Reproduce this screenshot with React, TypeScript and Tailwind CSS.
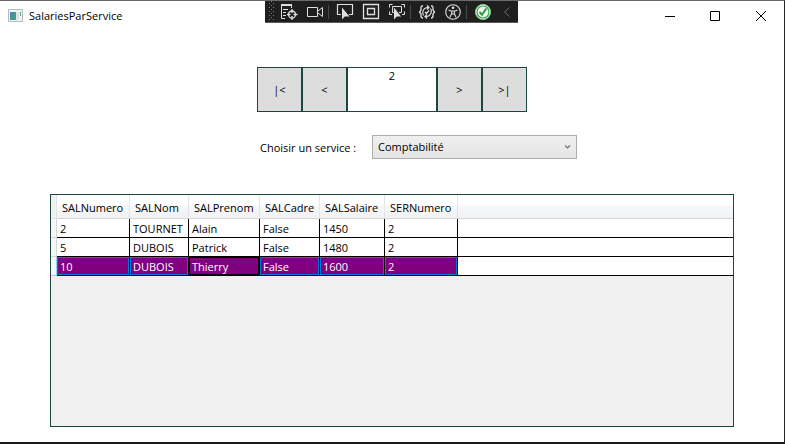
import React, { useState } from "react";

const columns = [
  { name: "SALNumero", width: "w-[73px]" },
  { name: "SALNom", width: "w-[59px]" },
  { name: "SALPrenom", width: "w-[71px]" },
  { name: "SALCadre", width: "w-[60px]" },
  { name: "SALSalaire", width: "w-[65px]" },
  { name: "SERNumero", width: "w-[73px]" },
];

const rows = [
  ["2", "TOURNET", "Alain", "False", "1450", "2"],
  ["5", "DUBOIS", "Patrick", "False", "1480", "2"],
  ["10", "DUBOIS", "Thierry", "False", "1600", "2"],
];

function Icon({ children }: { children: React.ReactNode }) {
  return (
    <svg viewBox="0 0 18 18" className="h-[18px] w-[18px]" fill="none" stroke="#e0e0e0" aria-hidden="true">
      {children}
    </svg>
  );
}

function ToolButton({ label, children }: { label: string; children: React.ReactNode }) {
  return (
    <button type="button" aria-label={label} className="flex w-[26px] shrink-0 items-center justify-center">
      <Icon>{children}</Icon>
    </button>
  );
}

function Separator() {
  return (
    <div className="flex w-1 shrink-0 items-center">
      <div className="h-3.5 w-px bg-[#484848]" />
    </div>
  );
}

function DebugToolbar() {
  return (
    <div role="toolbar" aria-label="Débogage" className="absolute top-0 left-[265px] flex h-[22px] w-[253px] border-b border-[#5a5a5a] bg-[#1f1f1f]">
      <svg viewBox="0 0 11 21" className="h-[21px] w-[11px] shrink-0" fill="#7a7a7a" aria-hidden="true">
        {[2, 6, 10, 14, 18].map((y) => (
          <g key={y}>
            <rect x="4" y={y} width="1" height="1" />
            <rect x="8" y={y} width="1" height="1" />
            <rect x="6" y={y - 2} width="1" height="1" />
          </g>
        ))}
      </svg>
      <ToolButton label="Arborescence visuelle">
        <path d="M1 2H12" strokeWidth="2" />
        <path d="M1.5 3V15.5H5M11.5 3V5M3 6.5H8M3 9.5H6M3 12.5H6" />
        <circle cx="12" cy="11.5" r="3.5" strokeWidth="1.3" />
        <path d="M12 6V10M12 13V17M7 11.5H10.5M13.5 11.5H17.5" strokeWidth="1.3" />
      </ToolButton>
      <ToolButton label="Enregistrer">
        <path d="M1.5 4.5H11.5V13.5H1.5ZM12 8L16.5 4.5V13.5L12 10" />
      </ToolButton>
      <Separator />
      <ToolButton label="Sélectionner un élément">
        <path d="M5 11.5H1.5V1.5H16.5V11.5H13" strokeWidth="1.2" />
        <path d="M6 4.5V16.5L8.8 13.5H13.5Z" fill="#e0e0e0" stroke="none" />
      </ToolButton>
      <ToolButton label="Afficher la disposition">
        <path d="M1.5 1.5H16.5V15.5H1.5ZM5.5 5.5H12.5V11.5H5.5Z" strokeWidth="1.3" />
      </ToolButton>
      <ToolButton label="Suivre l’élément actif">
        <path d="M1.5 4.5V1.5H4.5M13.5 1.5H16.5V4.5M1.5 8.5V11.5H4M14 11.5H16.5V8.5M6 9.5H4.5V3.5H13.5V9.5H11" />
        <path d="M6 4.5V16.5L8.8 13.5H13Z" fill="#e0e0e0" stroke="none" />
      </ToolButton>
      <Separator />
      <ToolButton label="Rechargement à chaud">
        <path d="M5 3H4Q3 3 3 5V7L1.5 9L3 11V13Q3 15 5 15M13 3H14Q15 3 15 5V7L16.5 9L15 11V13Q15 15 13 15" strokeWidth="1.3" />
        <path d="M5.5 12.5C4 10 4.5 5.5 9 4.5H11M9 2.5L11 4.5L9 6.5M12.5 5.5C14 8 13.5 12.5 9 13.5H7M9 11.5L7 13.5L9 15.5M7 9L8.5 10.5L11 7.5" strokeWidth="1.2" />
      </ToolButton>
      <ToolButton label="Accessibilité">
        <circle cx="9" cy="9" r="7.3" strokeWidth="1.1" />
        <circle cx="9" cy="4.8" r="1.3" fill="#e0e0e0" stroke="none" />
        <path d="M4.5 7L7.7 8.3V10.5L6 14.3M13.5 7L10.3 8.3V10.5L12 14.3M7.7 8H10.3M7.7 11H10.3" strokeWidth="1.1" />
      </ToolButton>
      <Separator />
      <ToolButton label="Aucun échec de liaison">
        <circle cx="9" cy="9" r="7.6" fill="#f3f3f3" stroke="#7fc98a" />
        <circle cx="9" cy="9" r="6" stroke="#39a849" strokeWidth="1.2" />
        <path d="M5.5 9L8 11.7L12.3 5.5" stroke="#2c9b3d" strokeWidth="2" />
      </ToolButton>
      <button type="button" aria-label="Réduire la barre" className="flex flex-1 items-center justify-center">
        <svg viewBox="0 0 8 12" className="h-3 w-2" fill="none" stroke="#6e6e6e" aria-hidden="true">
          <path d="M6.5 1.5L1.5 6L6.5 10.5" />
        </svg>
      </button>
    </div>
  );
}

function TitleBar() {
  return (
    <header className="flex h-[29px] items-center pl-2">
      <svg viewBox="0 0 15 13" className="h-[13px] w-[15px]" aria-hidden="true">
        <defs>
          <linearGradient id="appFill" x2="1" y2="1">
            <stop stopColor="#4d82bd" />
            <stop offset="1" stopColor="#43a36e" />
          </linearGradient>
        </defs>
        <path d="M.5 .5H14.5V12.5H.5Z" fill="#f1f3f4" stroke="#b4bbc0" />
        <path d="M2 3H8V11H2Z" fill="url(#appFill)" />
        <path d="M8 3H11V11H8Z" fill="#dfe3e6" />
        <path d="M12 3H13V7H12Z" fill="#58a77c" />
      </svg>
      <h1 className="ml-1.5 flex-1">SalariesParService</h1>
      <button type="button" aria-label="Réduire" className="flex h-full w-11 items-center justify-center">
        <svg viewBox="0 0 10 10" className="h-2.5 w-2.5" aria-hidden="true"><path d="M0 5.5H10" stroke="black" /></svg>
      </button>
      <button type="button" aria-label="Agrandir" className="flex h-full w-[46px] items-center justify-center">
        <svg viewBox="0 0 10 10" className="h-2.5 w-2.5" fill="none" aria-hidden="true"><path d="M.5 .5H9.5V9.5H.5Z" stroke="black" /></svg>
      </button>
      <button type="button" aria-label="Fermer" className="flex h-full w-[46px] items-center justify-center">
        <svg viewBox="0 0 10 10" className="h-2.5 w-2.5" fill="none" aria-hidden="true"><path d="M0 0L10 10M10 0L0 10" stroke="black" /></svg>
      </button>
    </header>
  );
}

function NavButton({ label, children }: { label: string; children: string }) {
  return (
    <button type="button" aria-label={label} className="h-[45px] w-[45px] border border-[#1b4540] bg-[#dddddd]">
      {children}
    </button>
  );
}

function EmployeeGrid() {
  return (
    <div className="mx-[50px] mt-[35px] mb-[15px] flex-1 border border-[#1b4540] bg-[#f0f0f0]">
      <table className="w-full table-fixed border-separate border-spacing-0 bg-white text-left">
        <colgroup>
          <col className="w-1.5" />
          {columns.map((c) => <col key={c.name} className={c.width} />)}
          <col />
        </colgroup>
        <thead>
          <tr className="h-6 bg-linear-to-b from-white from-40% via-[#f7f8fa] via-45% to-[#f0f1f3]">
            <td className="border-r border-b border-[#dfe1e3] bg-[#f0f0f0] p-0" />
            {columns.map((c) => (
              <th key={c.name} scope="col" className="border-r border-b border-r-[#e3e5e7] border-b-[#d5d5d5] p-0 pt-0.5 pl-[5px] font-normal whitespace-nowrap">{c.name}</th>
            ))}
            <td className="border-b border-[#d5d5d5] p-0" />
          </tr>
        </thead>
        <tbody>
          {rows.map((row, r) => {
            const selected = r === 2;
            return (
              <tr key={row[0]} aria-selected={selected} className="h-[19px]">
                <td className={selected ? "border-r border-b border-[#8fd0ee] bg-[#f0f9fd] p-0" : "border-r border-b border-[#d5d5d5] bg-[#f5f6f8] p-0"} />
                {row.map((value, c) => (
                  <td key={columns[c].name} className="border-r border-b border-black p-0 whitespace-nowrap">
                    <div
                      className={
                        !selected
                          ? "h-[18px] pt-0.5 pl-[3px]"
                          : c === 2
                            ? "h-[18px] border border-black bg-[#800080] pt-px pl-0.5 text-white"
                            : "h-[18px] border border-[#0078d7] bg-[#800080] pt-px pl-0.5 text-white"
                      }
                    >
                      {value}
                    </div>
                  </td>
                ))}
                <td className="border-b border-black p-0" />
              </tr>
            );
          })}
        </tbody>
      </table>
    </div>
  );
}

export default function App() {
  const [service, setService] = useState("Comptabilité");
  return (
    <main className="relative flex min-h-screen flex-col border-t border-r border-b-2 border-t-[#6b6b6b] border-r-[#242424] border-b-[#1c191c] bg-white font-['Open_Sans',sans-serif] text-[11px] leading-4 text-black">
      <TitleBar />
      <DebugToolbar />
      <nav aria-label="Navigation" className="mt-[37px] flex justify-center">
        <NavButton label="Premier">|&lt;</NavButton>
        <NavButton label="Précédent">&lt;</NavButton>
        <input aria-label="Numéro du service" defaultValue="2" className="h-[45px] w-[90px] border border-[#1b4540] pb-[29px] text-center outline-none" />
        <NavButton label="Suivant">&gt;</NavButton>
        <NavButton label="Dernier">&gt;|</NavButton>
      </nav>
      <div className="mt-[23px] flex items-center justify-center pl-[53px]">
        <label htmlFor="service" className="w-28 pt-0.5">Choisir un service :</label>
        <div className="relative">
          <select
            id="service"
            value={service}
            onChange={(e) => setService(e.target.value)}
            className="block h-6 w-[205px] appearance-none border border-[#acacac] bg-linear-to-b from-[#f0f0f0] to-[#e5e5e5] px-[5px] outline-none"
          >
            <option>Comptabilité</option>
          </select>
          <svg viewBox="0 0 7 5" className="pointer-events-none absolute top-2.5 right-1.5 h-[5px] w-[7px]" fill="none" stroke="#707070" aria-hidden="true">
            <path d="M1 .5L3.5 3L6 .5" strokeWidth="1.2" />
          </svg>
        </div>
      </div>
      <EmployeeGrid />
    </main>
  );
}
